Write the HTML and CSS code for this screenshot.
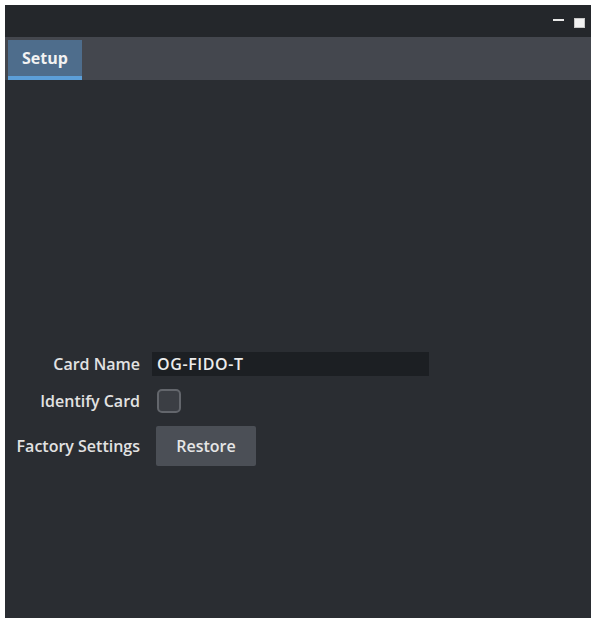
FILE: index.html
```html
<!DOCTYPE html>
<html>
<head>
<meta charset="utf-8">
<link rel="stylesheet" href="styles.css">
</head>
<body>
<div class="window">
  <div class="titlebar">
    <span class="btn-min"></span>
    <span class="btn-max"></span>
  </div>
  <div class="tabbar">
    <div class="tab">Setup</div>
  </div>
  <div class="content">
    <div class="form">
      <div class="label">Card Name</div>
      <div class="field"><div class="input">OG-FIDO-T</div></div>
      <div class="label">Identify Card</div>
      <div class="field"><span class="checkbox"></span></div>
      <div class="label">Factory Settings</div>
      <div class="field"><button class="button">Restore</button></div>
    </div>
  </div>
</div>
</body>
</html>
```
FILE: styles.css
```css
html, body {
  margin: 0;
  padding: 0;
  background: #ffffff;
  height: 100%;
}
body {
  font-family: "Open Sans", "DejaVu Sans", sans-serif;
  overflow: hidden;
}
.window {
  margin: 5px 4px 0 5px;
  height: 613px;
  background: #2a2d32;
  display: flex;
  flex-direction: column;
}
.titlebar {
  height: 32px;
  background: #24272b;
  display: flex;
  align-items: center;
  justify-content: flex-end;
  padding-right: 6px;
  gap: 10px;
  flex: none;
}
.btn-min {
  width: 11px;
  height: 2px;
  background: #e8e8e8;
  margin-top: -2px;
}
.btn-max {
  width: 9px;
  height: 8px;
  background: #f2f2f2;
  border: 1px solid #c8c8c8;
  margin-top: 3px;
}
.tabbar {
  height: 43px;
  background: #44474e;
  padding: 3px 0 0 3px;
  box-sizing: border-box;
  flex: none;
  display: flex;
}
.tab {
  width: 74px;
  height: 40px;
  box-sizing: border-box;
  background: #4e6d8c;
  border-bottom: 4px solid #5c9fd9;
  color: #f2f2f2;
  font-weight: 700;
  font-size: 16px;
  padding: 7px 0 0 14px;
}
.content {
  flex: 1;
  padding-top: 272px;
}
.form {
  display: grid;
  grid-template-columns: 135px auto;
  grid-template-rows: 24px 24px 40px;
  column-gap: 12px;
  row-gap: 13px;
  color: #e2e2e2;
  font-size: 16px;
  font-weight: 600;
}
.label {
  text-align: right;
  display: flex;
  align-items: center;
  justify-content: flex-end;
  white-space: nowrap;
}
.field {
  display: flex;
  align-items: center;
}
.input {
  width: 277px;
  height: 24px;
  box-sizing: border-box;
  background: #1c1f23;
  padding-left: 5px;
  line-height: 24px;
  color: #ececec;
  font-size: 16px;
  letter-spacing: 0.6px;
}
.checkbox {
  width: 24px;
  height: 24px;
  box-sizing: border-box;
  margin-left: 5px;
  border: 2px solid #63666c;
  border-radius: 5px;
  background: #3b3e44;
}
.button {
  margin-left: 4px;
  width: 100px;
  height: 40px;
  border: none;
  border-radius: 2px;
  background: #4b4f56;
  color: #e6e6e6;
  font-family: "Open Sans", "DejaVu Sans", sans-serif;
  font-size: 16px;
  font-weight: 600;
  padding: 0;
}
```
